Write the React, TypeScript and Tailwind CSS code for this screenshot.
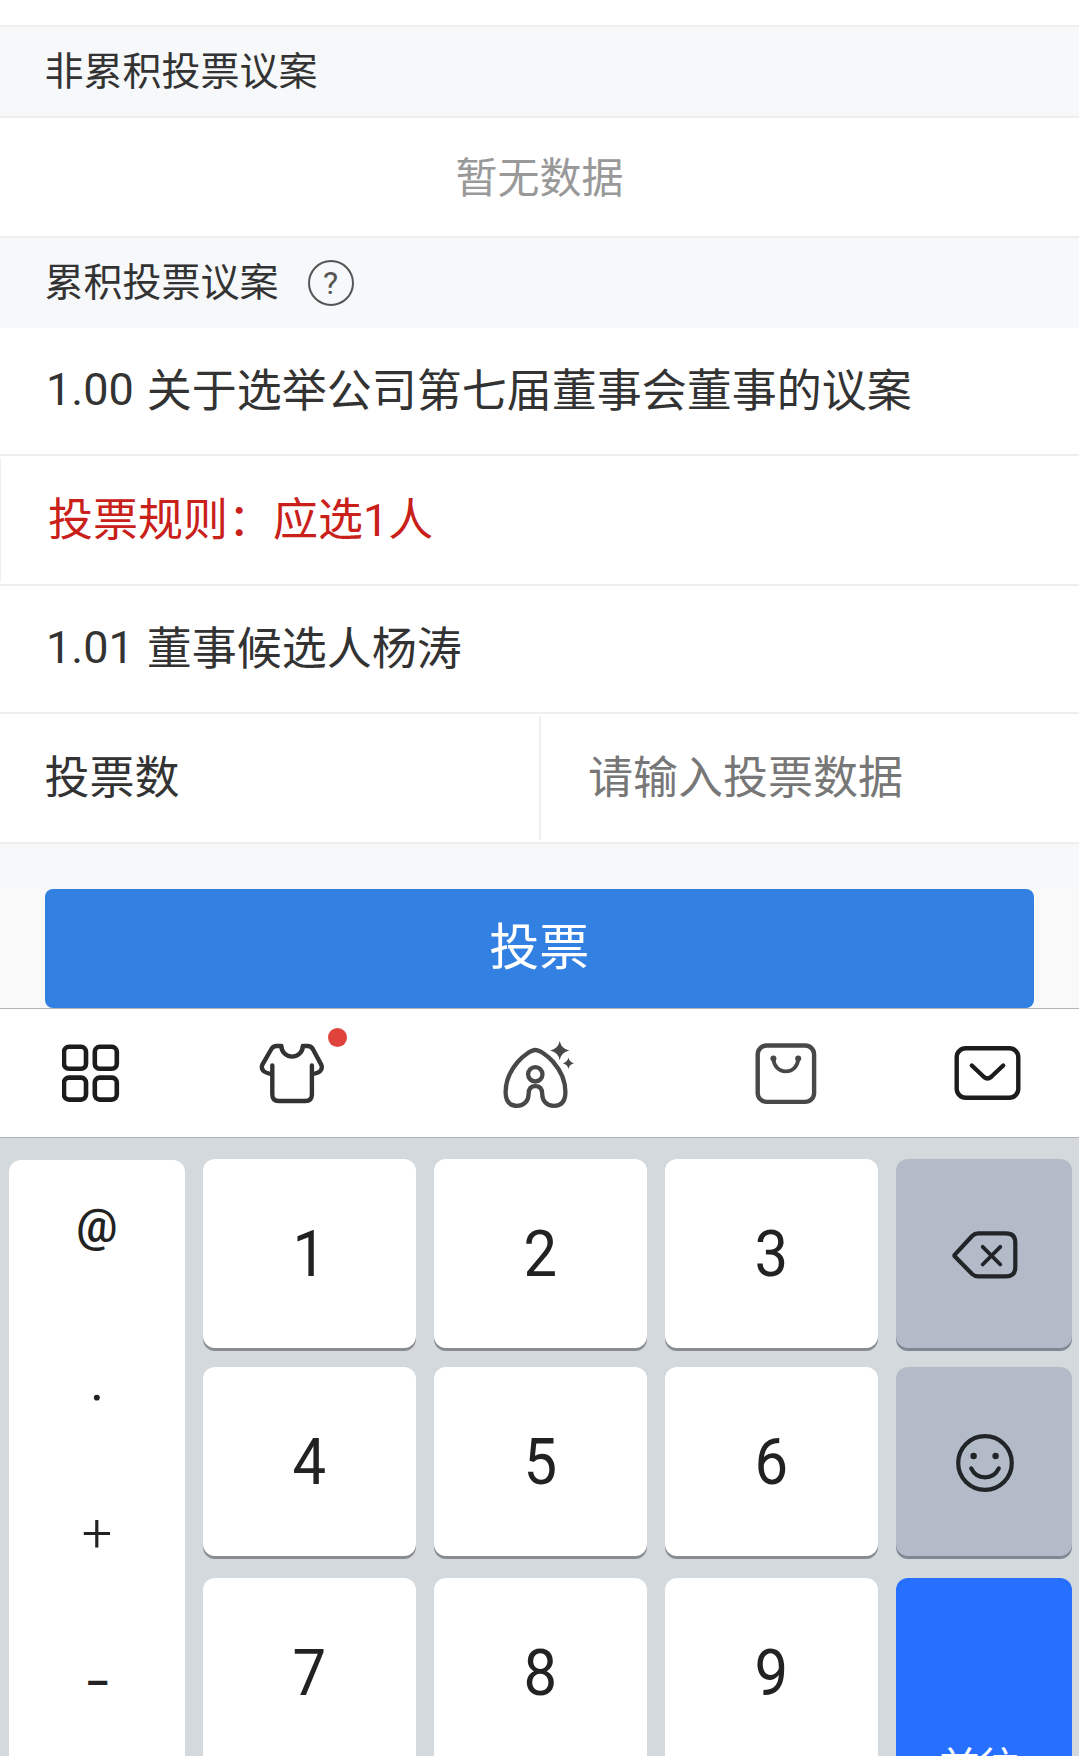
import type { ReactNode } from "react";

const digitRows = [
  ["1", "2", "3"],
  ["4", "5", "6"],
  ["7", "8", "9"],
];

function AppsIcon() {
  return (
    <svg width="58" height="58" viewBox="0 0 58 58" fill="none" stroke="#1c1c1c" strokeWidth="4.6">
      <rect x="2" y="2.8" width="22" height="22" rx="5" />
      <rect x="32.8" y="2.8" width="22" height="22" rx="5" />
      <rect x="2" y="33.6" width="22" height="22" rx="5" />
      <rect x="32.8" y="33.6" width="22" height="22" rx="5" />
    </svg>
  );
}

function ShirtIcon() {
  return (
    <svg width="66" height="62" viewBox="0 0 66 62" fill="none" stroke="#333" strokeWidth="4.4" strokeLinecap="round" strokeLinejoin="round">
      <path d="M13 31.2C10 30.6 6.4 29.8 4.5 28C2.7 26 2.3 24 3.4 21.6L12.4 6Q14.2 3 17.5 3H22.4C22.4 9 27 13.6 33.1 13.6S43.8 9 43.8 3H48.7Q52 3 53.8 6L62.2 21.6C63.3 24 63 26 61.2 28C59.4 29.8 56 30.6 53 31.2" />
      <path d="M13.3 22.5V51.5Q13.3 58 19.8 58H46.4Q52.9 58 52.9 51.5V22.5" />
    </svg>
  );
}

function AssistantIcon() {
  return (
    <svg width="76" height="72" viewBox="0 0 76 72" fill="none" stroke="#484848" strokeWidth="4.3" strokeLinejoin="round">
      <path d="M35.3 11C28 11 5.6 29 5.6 53C5.6 62 9.6 66.8 17 66.8C24 66.8 28.6 62 28.6 55C28.6 50 30.5 47.2 35.3 47.2S42.2 50 42.2 55C42.2 62 46.8 66.8 53.8 66.8C61.4 66.8 65.4 62 65.4 53C65.4 29 43 11 35.3 11Z" />
      <circle cx="35.3" cy="35.3" r="7.2" />
      <path d="M59.7 2Q61.4 9.9 69.3 11.6Q61.4 13.3 59.7 21.2Q58 13.3 50.1 11.6Q58 9.9 59.7 2Z" fill="#484848" stroke="none" />
      <path d="M68.4 18.6Q69.4 23.3 74.1 24.3Q69.4 25.3 68.4 30Q67.4 25.3 62.7 24.3Q67.4 23.3 68.4 18.6Z" fill="#484848" stroke="none" />
    </svg>
  );
}

function BagIcon() {
  return (
    <svg width="62" height="62" viewBox="0 0 62 62" fill="none" stroke="#484848" strokeWidth="4.4">
      <rect x="2.7" y="2.5" width="56.4" height="56.4" rx="9" />
      <path d="M18.4 15.5C18.7 23 23.7 28.3 30.9 28.3S42.9 23 43.2 15.5" strokeWidth="3.8" />
      <circle cx="18.4" cy="15.4" r="3" fill="#484848" stroke="none" />
      <circle cx="43.2" cy="15.4" r="3" fill="#484848" stroke="none" />
    </svg>
  );
}

function CollapseIcon() {
  return (
    <svg width="68" height="56" viewBox="0 0 68 56" fill="none" stroke="#1c1c1c" strokeWidth="4.4" strokeLinecap="round" strokeLinejoin="round">
      <rect x="2.7" y="3.2" width="61.6" height="49.6" rx="9" />
      <path d="M17.8 20.5L30 32Q33.5 35 37 32L49.2 20.5" />
    </svg>
  );
}

function BackspaceIcon() {
  return (
    <svg width="66" height="50" viewBox="0 0 66 50" fill="none" stroke="#222528" strokeWidth="4.2" strokeLinecap="round" strokeLinejoin="round">
      <path d="M2.4 25.2L20.1 6Q22.8 3.4 26.1 3.4H54Q63.3 3.4 63.3 12.7V37.1Q63.3 46.4 54 46.4H26.1Q22.8 46.4 20.1 44L2.4 26.1Z" />
      <path d="M30.7 16.8L48.3 34.5M48.3 16.8L30.7 34.5" strokeWidth="3.8" />
    </svg>
  );
}

function SmileIcon() {
  return (
    <svg width="60" height="60" viewBox="0 0 60 60" fill="none" stroke="#222528" strokeWidth="4.2" strokeLinecap="round">
      <circle cx="30" cy="30" r="26.8" />
      <path d="M16.2 35.4C19 41.2 23.7 44.4 30 44.4S41 41.2 43.8 35.4" />
      <circle cx="18.6" cy="23" r="3.2" fill="#222528" stroke="none" />
      <circle cx="40.6" cy="23" r="3.2" fill="#222528" stroke="none" />
    </svg>
  );
}

function SideKey({ children }: { children: ReactNode }) {
  return (
    <button className="flex h-[189px] w-44 items-center justify-center rounded-xl bg-[#b3bbc8] pt-[2px] pl-[2px] shadow-[0_3px_0_#7f8894]">
      {children}
    </button>
  );
}

function VoteForm() {
  return (
    <div className="flex flex-col text-[45px] leading-none text-[#333]">
      <div className="flex h-[93px] items-center border-y-2 border-[#eeeeef] bg-[#f6f8fa] pt-[2px] pl-[44.5px] text-[39px]">
        非累积投票议案
      </div>
      <div className="flex h-[118px] items-center justify-center pt-[4px] text-[42px] text-[#999]">暂无数据</div>
      <div className="flex h-[92px] items-center border-t-2 border-[#eeeeef] bg-[#f6f8fa] pl-[44.5px] text-[39px]">
        累积投票议案
        <span className="ml-[29px] flex size-[46px] items-center justify-center rounded-full border-2 border-[#555] text-[32px] text-[#555]">
          ?
        </span>
      </div>
      <div className="flex h-[128px] items-center border-b-2 border-[#eee] pl-[46px]">
        <span className="mr-[13px] -translate-y-[2px]">1.00</span>
        关于选举公司第七届董事会董事的议案
      </div>
      <div className="h-[130px] border-b-2 border-[#eee] py-[2px]">
        <div className="flex h-full items-center border-l border-[#eee] pl-[47px] text-[#c9201a]">投票规则：应选1人</div>
      </div>
      <div className="flex h-[128px] items-center border-b-2 border-[#eee] pl-[46px]">
        <span className="mr-[13px] -translate-y-[2px]">1.01</span>
        董事候选人杨涛
      </div>
      <div className="flex h-[130px] border-b-2 border-[#eee] py-[2px]">
        <div className="flex w-[541px] items-center border-r-2 border-[#f0f0f0] pt-px pl-[44.5px]">投票数</div>
        <input
          className="min-w-0 flex-1 pt-px pl-[47px] outline-none placeholder:text-[#777] placeholder:opacity-100"
          placeholder="请输入投票数据"
        />
      </div>
      <div className="h-[45px] bg-[#f6f8fa]" />
      <div className="h-[119px] bg-[#f9f9f9] pr-[45px] pl-[44.5px]">
        <button className="h-[119px] w-full rounded-lg bg-[#3280e2] pb-px text-[50px] text-white">投票</button>
      </div>
    </div>
  );
}

function Toolbar() {
  return (
    <div className="flex h-[130px] items-start border-y border-[#b3b6b8] bg-white pl-[62px]">
      <button className="mt-[35px]">
        <AppsIcon />
      </button>
      <button className="relative mt-[34px] ml-[139px]">
        <ShirtIcon />
        <span className="absolute -top-[15px] left-[69px] size-[19px] rounded-full bg-[#e0423c]" />
      </button>
      <button className="mt-[30px] ml-[175px]">
        <AssistantIcon />
      </button>
      <button className="mt-[34px] ml-[179px]">
        <BagIcon />
      </button>
      <button className="mt-[36px] ml-[137px]">
        <CollapseIcon />
      </button>
    </div>
  );
}

function Keyboard() {
  return (
    <div className="flex h-[619px] items-start gap-[18px] overflow-hidden bg-[#d3d9dd] pt-[21px] pl-[8.5px] text-[#222]">
      <div className="mt-px flex h-[620px] w-44 shrink-0 flex-col rounded-xl bg-white pl-px text-center text-[45px] leading-none">
        <span className="pt-[43px] text-[46px] font-medium">@</span>
        <span className="pt-[106px] text-[54px]">.</span>
        <span className="pt-[98px] text-[54px] font-light">+</span>
        <span className="scale-x-[0.85] pt-[100px] font-medium">–</span>
      </div>
      <div className="flex shrink-0 flex-col">
        {digitRows.map((row, i) => (
          <div key={i} className={i === 2 ? "mt-[22px] flex gap-[18px]" : i === 1 ? "mt-[19px] flex gap-[18px]" : "flex gap-[18px]"}>
            {row.map((n) => (
              <button key={n} className="flex h-[189px] w-[213px] items-center justify-center rounded-xl bg-white pt-px text-[65px] leading-none shadow-[0_3px_0_#8b8c90]">
                <span className="scale-x-[0.92]">{n}</span>
              </button>
            ))}
          </div>
        ))}
      </div>
      <div className="flex shrink-0 flex-col">
        <SideKey>
          <BackspaceIcon />
        </SideKey>
        <div className="mt-[19px]">
          <SideKey>
            <SmileIcon />
          </SideKey>
        </div>
        <button className="mt-[22px] h-[380px] w-44 rounded-xl bg-[#276fff] pr-[8px] text-[40px] text-white">前往</button>
      </div>
    </div>
  );
}

export default function App() {
  return (
    <div className="h-[1756px] w-[1079px] overflow-hidden bg-white pt-[25px] font-[Roboto,'Noto_Sans_CJK_SC',sans-serif]">
      <VoteForm />
      <Toolbar />
      <Keyboard />
    </div>
  );
}
